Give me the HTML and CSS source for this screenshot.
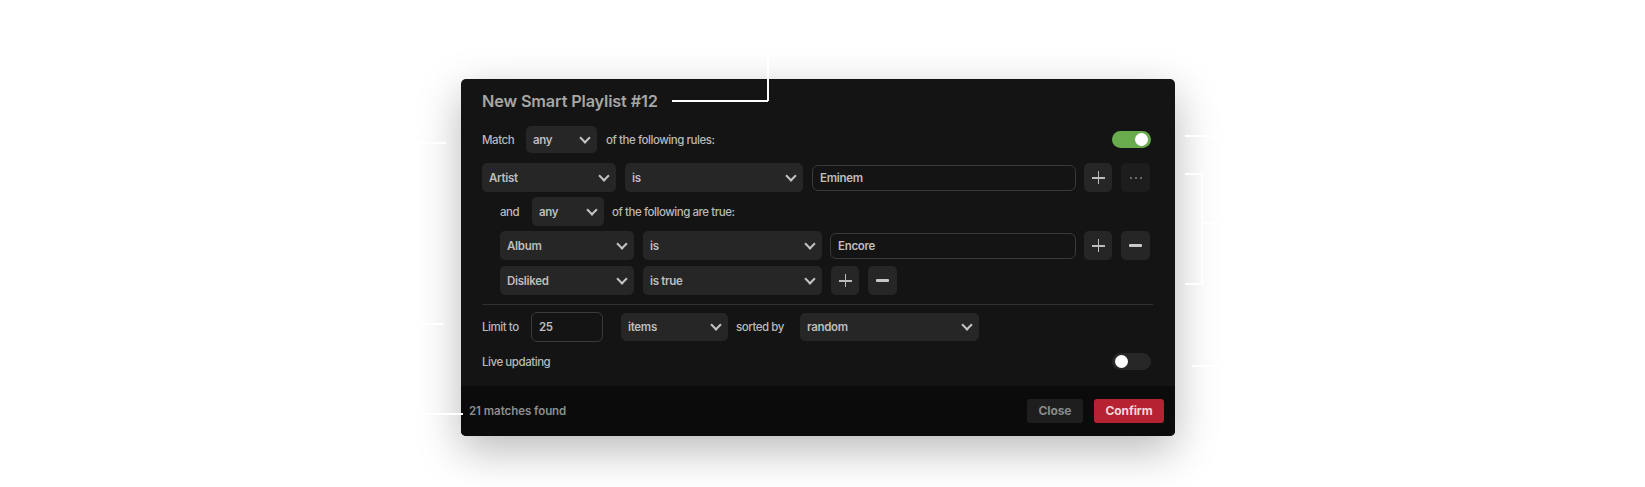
FILE: index.html
```html
<!DOCTYPE html>
<html>
<head>
<meta charset="utf-8">
<link rel="stylesheet" href="styles.css">
</head>
<body>
<div class="stage">
  <div class="dialog">
    <div class="body">
      <h1 class="title">New Smart Playlist #12</h1>
      <div class="row row-match">
        <span class="label l-match">Match</span>
        <div class="select w-any">any<i class="chev"></i></div>
        <span class="label">of the following rules:</span>
        <div class="spacer"></div>
        <div class="toggle on"><span class="knob"></span></div>
      </div>
      <div class="row row-rule">
        <div class="select w-field">Artist<i class="chev"></i></div>
        <div class="select w-op">is<i class="chev"></i></div>
        <div class="input w-val1">Eminem</div>
        <button class="btn-icon"><i class="plus"></i></button>
        <button class="btn-icon dim"><i class="dots"><b></b><b></b><b></b></i></button>
      </div>
      <div class="nested">
        <div class="row row-and">
          <span class="label l-and">and</span>
          <div class="select w-any2">any<i class="chev"></i></div>
          <span class="label">of the following are true:</span>
        </div>
        <div class="row row-sub">
          <div class="select w-field">Album<i class="chev"></i></div>
          <div class="select w-op2">is<i class="chev"></i></div>
          <div class="input w-val2">Encore</div>
          <button class="btn-icon"><i class="plus"></i></button>
          <button class="btn-icon"><i class="minus"></i></button>
        </div>
        <div class="row row-sub2">
          <div class="select w-field">Disliked<i class="chev"></i></div>
          <div class="select w-op2">is true<i class="chev"></i></div>
          <button class="btn-icon"><i class="plus"></i></button>
          <button class="btn-icon"><i class="minus"></i></button>
        </div>
      </div>
      <hr class="divider">
      <div class="row row-limit">
        <span class="label l-limit">Limit to</span>
        <div class="input w-num">25</div>
        <div class="select w-items">items<i class="chev"></i></div>
        <span class="label l-sorted">sorted by</span>
        <div class="select w-sort">random<i class="chev"></i></div>
      </div>
      <div class="row row-live">
        <span class="label">Live updating</span>
        <div class="spacer"></div>
        <div class="toggle"><span class="knob"></span></div>
      </div>
    </div>
    <div class="footer">
      <span class="count">21 matches found</span>
      <div class="spacer"></div>
      <button class="btn close">Close</button>
      <button class="btn confirm">Confirm</button>
    </div>
  </div>

  <div class="notes">
    <span class="ln h" style="left:672px;top:100px;width:96px"></span>
    <span class="ln v" style="left:767px;top:0px;height:101px"></span>
    <span class="ln h" style="left:300px;top:142px;width:146px"></span>
    <span class="ln h" style="left:300px;top:323px;width:143px"></span>
    <span class="ln h" style="left:300px;top:413px;width:163px"></span>
    <span class="ln h" style="left:1185px;top:135px;width:300px"></span>
    <span class="ln h" style="left:1185px;top:173px;width:17px"></span>
    <span class="ln h" style="left:1185px;top:283px;width:17px"></span>
    <span class="ln v" style="left:1201px;top:173px;height:111px"></span>
    <span class="ln h" style="left:1201px;top:222px;width:300px"></span>
    <span class="ln h" style="left:1192px;top:365px;width:300px"></span>
  </div>
</div>
</body>
</html>
```

FILE: styles.css
```css
* { box-sizing: border-box; }
html, body { margin: 0; padding: 0; background: #ffffff; }
body {
  width: 1645px;
  height: 487px;
  overflow: hidden;
  font-family: Inter, "Noto Sans", "Liberation Sans", sans-serif;
}
.stage {
  position: relative;
  width: 1645px;
  height: 487px;
  padding-top: 79px;
  padding-left: 461px;
}
.dialog {
  width: 714px;
  height: 357px;
  background: #141414;
  border-radius: 5px;
  box-shadow: 0 14px 44px rgba(0, 0, 0, 0.28);
  display: flex;
  flex-direction: column;
  overflow: hidden;
}
.body {
  flex: 1;
  padding: 11px 25px 0 21px;
  display: flex;
  flex-direction: column;
}
.title {
  margin: 0;
  font-size: 16.3px;
  line-height: 22px;
  font-weight: 600;
  color: #a6a6a6;
  letter-spacing: -0.15px;
}
.row {
  display: flex;
  align-items: center;
}
.label {
  font-size: 11.5px;
  font-weight: 500;
  color: #bababa;
  letter-spacing: -0.45px;
  white-space: nowrap;
}
.l-match { width: 44px; flex: none; }
.l-and { width: 32px; flex: none; }
.l-limit { width: 49px; flex: none; }
.l-sorted { width: 72px; flex: none; padding-left: 8px; }
.spacer { flex: 1; }
.row-match { margin-top: 14px; height: 27px; }
.row-match .w-any { margin-right: 9px; }
.row-rule { margin-top: 10px; height: 29px; gap: 9px; }
.nested { padding-left: 18px; }
.row-and { margin-top: 5px; height: 29px; }
.row-and .w-any2 { margin-right: 8px; }
.row-sub { margin-top: 5px; height: 29px; gap: 9px; }
.row-sub2 { margin-top: 6px; height: 29px; gap: 9px; }

.select {
  position: relative;
  height: 100%;
  background: #262626;
  border-radius: 5px;
  padding-left: 7px;
  display: flex;
  align-items: center;
  font-size: 11.5px;
  font-weight: 600;
  color: #bdbdbd;
  letter-spacing: -0.3px;
  flex: none;
}
.chev {
  position: absolute;
  right: 8px;
  top: 50%;
  width: 8px;
  height: 8px;
  margin-top: -6px;
  border-right: 2px solid #c4c4c4;
  border-bottom: 2px solid #c4c4c4;
  transform: rotate(45deg);
}
.w-any { width: 71px; }
.w-any2 { width: 72px; }
.w-field { width: 134px; }
.w-op { width: 178px; }
.w-op2 { width: 179px; }
.w-items { width: 107px; }
.w-sort { width: 179px; }

.input {
  height: 26px;
  border: 1px solid #3a3a3a;
  border-radius: 6px;
  padding-left: 7px;
  display: flex;
  align-items: center;
  font-size: 11.5px;
  font-weight: 600;
  color: #bdbdbd;
  letter-spacing: -0.3px;
  flex: none;
}
.w-val1 { width: 264px; margin-right: -1px; }
.w-val2 { width: 246px; margin-left: -1px; margin-right: -1px; }
.w-num { width: 72px; height: 30px; margin-right: 18px; }

.btn-icon {
  width: 28px;
  height: 29px;
  border: none;
  padding: 0;
  border-radius: 5px;
  background: #262626;
  display: flex;
  align-items: center;
  justify-content: center;
  flex: none;
}
.btn-icon + .btn-icon { width: 29px; }
.btn-icon.dim { background: #1d1d1d; }
.plus {
  position: relative;
  width: 13px;
  height: 13px;
}
.plus::before, .plus::after {
  content: "";
  position: absolute;
  background: #bcbcbc;
}
.plus::before { left: 0; right: 0; top: 6px; height: 1.5px; }
.plus::after { top: 0; bottom: 0; left: 6px; width: 1.5px; }
.minus {
  width: 13px;
  height: 3px;
  background: #c8c8c8;
  border-radius: 1px;
}
.dots { display: flex; gap: 3px; }
.dots b {
  width: 2px;
  height: 2px;
  border-radius: 50%;
  background: #808080;
}

.toggle {
  width: 39px;
  height: 17px;
  border-radius: 9px;
  background: #272727;
  position: relative;
  margin-right: -1px;
  flex: none;
}
.toggle.on { background: #6aab4e; }
.knob {
  position: absolute;
  top: 2px;
  left: 3px;
  width: 13px;
  height: 13px;
  border-radius: 50%;
  background: #ffffff;
}
.toggle.on .knob { left: auto; right: 3px; }

.divider {
  margin: 9px -3px 0 0;
  border: none;
  height: 1px;
  background: #303030;
}
.row-limit { margin-top: 7px; height: 30px; }
.row-limit .w-items { height: 28px; }
.row-limit .w-sort { height: 28px; }
.row-live { margin-top: 11px; height: 17px; }

.footer {
  height: 50px;
  flex: none;
  background: #0b0b0b;
  display: flex;
  align-items: center;
  padding: 0 11px 1px 8px;
  gap: 11px;
}
.count {
  font-size: 11.5px;
  font-weight: 600;
  color: #8e8e8e;
  letter-spacing: -0.05px;
}
.btn {
  height: 24px;
  border: none;
  border-radius: 3px;
  font-family: inherit;
  font-size: 12px;
  font-weight: 700;
  letter-spacing: -0.1px;
  padding: 0;
}
.btn.close { width: 56px; background: #1e1e1e; color: #8a8a8a; }
.btn.confirm { width: 70px; background: #b72233; color: #f1d7da; }

.notes {
  position: absolute;
  inset: 0;
  pointer-events: none;
}
.ln { position: absolute; background: #ffffff; }
.ln.h { height: 1.5px; }
.ln.v { width: 1.5px; }
```
